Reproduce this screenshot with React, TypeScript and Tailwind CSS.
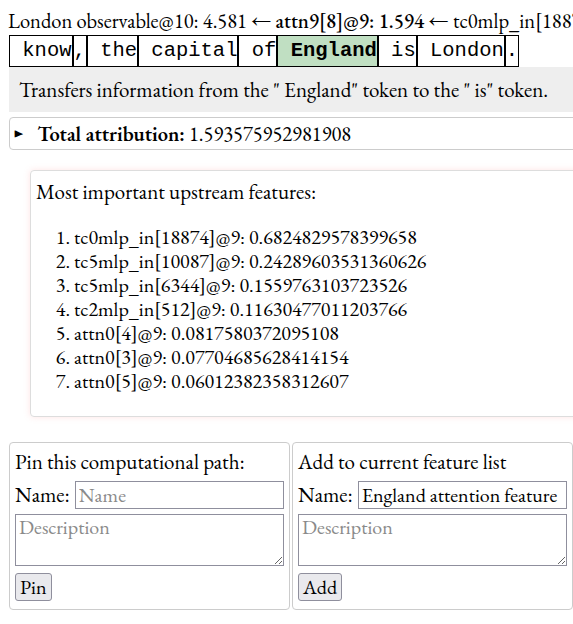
import React from 'react'

const tokens = [
  { text: ' know' },
  { text: ',' },
  { text: ' the' },
  { text: ' capital' },
  { text: ' of' },
  { text: ' England', active: true },
  { text: ' is' },
  { text: ' London' },
  { text: '.' },
]

const features = [
  'tc0mlp_in[18874]@9: 0.6824829578399658',
  'tc5mlp_in[10087]@9: 0.24289603531360626',
  'tc5mlp_in[6344]@9: 0.1559763103723526',
  'tc2mlp_in[512]@9: 0.11630477011203766',
  'attn0[4]@9: 0.0817580372095108',
  'attn0[3]@9: 0.07704685628414154',
  'attn0[5]@9: 0.06012382358312607',
]

function SavePanel({ title, button, value }: { title: string; button: string; value?: string }) {
  return (
    <div className="flex flex-col gap-[5px] rounded border border-[#ccc] px-[5px] pb-[8px] pt-[5px] text-[21px]">
      <div className="leading-[28px]">{title}</div>
      <div className="flex items-center gap-[5px]">
        <span>Name:</span>
        <input
          className="h-[28px] min-w-0 flex-1 border border-[#8f8f9d] px-[3px] text-[20px] placeholder:text-[#8a8a8a]"
          placeholder="Name"
          defaultValue={value}
        />
      </div>
      <textarea
        className="h-[52px] w-full resize-y border border-[#8f8f9d] px-[3px] text-[20px] leading-[24px] placeholder:text-[#8a8a8a]"
        placeholder="Description"
      />
      <div className="pt-[2px]">
        <button className="h-[28px] rounded-[3px] border border-[#8f8f9d] bg-[#e9e9ed] px-[4px] text-[20px] leading-none">
          {button}
        </button>
      </div>
    </div>
  )
}

export default function App() {
  return (
    <div className="h-[624px] overflow-hidden bg-white p-2 font-['EB_Garamond','Liberation_Serif',serif] text-[20px] leading-[24px] text-black">
      {/* Path header */}
      <div className="whitespace-nowrap pt-px text-[20.5px]">
        London observable@10: 4.581 ← <span className="font-medium">attn9[8]@9: 1.594</span> ← tc0mlp_in[18874]@9: 0.682
      </div>

      {/* Tokens */}
      <div className="mt-[2px] flex pl-px font-['Liberation_Mono',monospace] text-[20.5px] leading-[30px]">
        {tokens.map((t, i) => (
          <span
            key={i}
            className={
              'whitespace-pre border border-black ' + (t.active ? 'bg-[#c0dfc2] font-bold' : '')
            }
          >
            {t.text}
          </span>
        ))}
      </div>

      {/* Description */}
      <div className="ml-px w-[600px] bg-[#eeeeee] px-[10px] py-[10px] text-[21px] leading-[25px]">
        Transfers information from the " England" token to the " is" token.
      </div>

      {/* Total attribution */}
      <div className="ml-px mt-[5px] flex h-[33px] w-[600px] items-center rounded border border-[#ccc] px-[4px] text-[20.5px]">
        <span className="mr-[14px] text-[12px]">▶</span>
        <span className="font-semibold">Total attribution:</span>&nbsp;1.593575952981908
      </div>

      {/* Upstream features */}
      <div className="ml-[22px] mt-[20px] h-[247px] w-[600px] rounded border border-[#ddd] p-[5px] shadow-[0_0_6px_rgba(255,150,150,0.25)]">
        <div className="pt-[4px] text-[21px]">Most important upstream features:</div>
        <ol className="mt-[21px] list-decimal pl-[38px] text-[20px]">
          {features.map((f) => (
            <li key={f} className="leading-[24px]">
              {f}
            </li>
          ))}
        </ol>
      </div>

      {/* Save panels */}
      <div className="ml-px mt-[25px] grid w-[564px] grid-cols-2 gap-[2px]">
        <SavePanel title="Pin this computational path:" button="Pin" />
        <SavePanel title="Add to current feature list" button="Add" value="England attention feature" />
      </div>
    </div>
  )
}
